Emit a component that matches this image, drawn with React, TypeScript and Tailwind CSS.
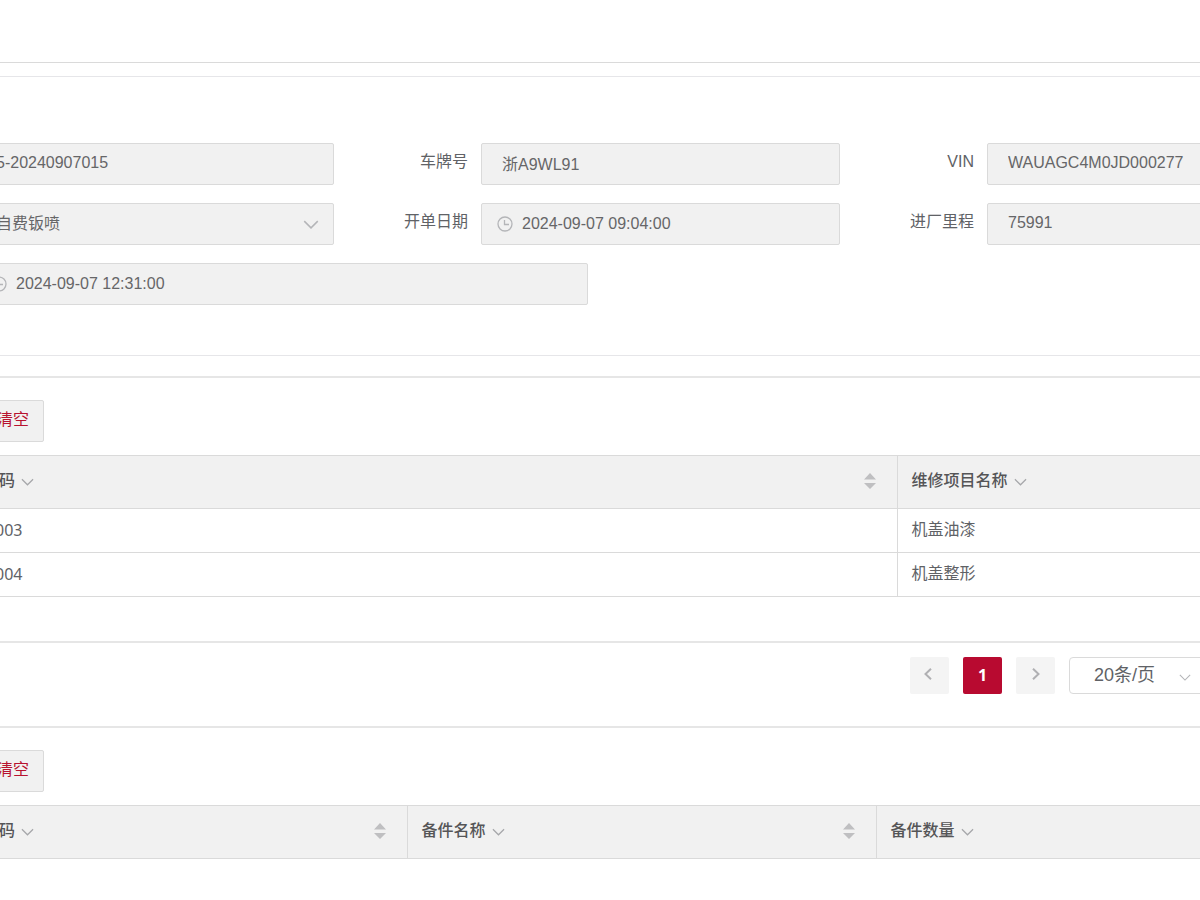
import type { ReactNode } from "react";

const fieldBox =
  "flex h-[42px] w-full items-center rounded-xs border border-[#dadada] bg-[#f1f1f1] text-base text-[#666668]";

function ChevronDown({ className }: { className?: string }) {
  return (
    <svg viewBox="0 0 14 8" fill="none" stroke="currentColor" strokeWidth="1.3" className={className} aria-hidden="true">
      <path d="M1 1l6 6 6-6" />
    </svg>
  );
}

function Clock() {
  return (
    <svg viewBox="0 0 16 16" fill="none" stroke="#b4b5b8" strokeWidth="1.3" className="size-4 shrink-0" aria-hidden="true">
      <circle cx="8" cy="8" r="7" />
      <path d="M7.5 4v4.500H12" />
    </svg>
  );
}

function Label({ htmlFor, children }: { htmlFor: string; children: ReactNode }) {
  return (
    <label htmlFor={htmlFor} className="h-[42px] pr-[13px] pt-[7px] text-right text-base text-[#606266]">
      {children}
    </label>
  );
}

function TextField({ id, value, label }: { id: string; value: string; label?: string }) {
  return <input id={id} aria-label={label} readOnly defaultValue={value} className={`${fieldBox} px-5 pb-0.5`} />;
}

function DateField({ id, value, label }: { id: string; value: string; label?: string }) {
  return (
    <div className={`${fieldBox} gap-[9px] pl-[15px] pr-5`}>
      <Clock />
      <input id={id} aria-label={label} readOnly defaultValue={value} className="min-w-0 flex-1 bg-transparent" />
    </div>
  );
}

function SortIcon() {
  return (
    <svg viewBox="0 0 12 16" fill="#bfbfc1" className="h-4 w-3 shrink-0" aria-hidden="true">
      <path d="M0 6.500L6 0l6 6.500zM0 10h12l-6 6z" />
    </svg>
  );
}

function HeadCell({ children, sortable, first }: { children: ReactNode; sortable?: boolean; first?: boolean }) {
  return (
    <th
      scope="col"
      className={`h-[53px] border-b border-r border-[#dadada] pb-0.5 pr-[21px] text-left font-medium text-[#555557] last:border-r-0 ${first ? "pl-6" : "pl-3.5"}`}
    >
      <div className="flex items-center gap-1.5">
        <span>{children}</span>
        <ChevronDown className="mt-0.5 h-2 w-[13px] text-[#a6a7aa]" />
        <span className="flex-1" />
        {sortable && <SortIcon />}
      </div>
    </th>
  );
}

function Toolbar() {
  return (
    <div className="pb-[13px] pl-[7px] pt-[22px]">
      <button type="button" className="h-[42px] rounded-xs border border-[#dadada] bg-[#f1f1f1] px-3.5 pb-[3px] text-base text-[#b8122f]">
        清空
      </button>
    </div>
  );
}

const repairs = [
  { code: "003", name: "机盖油漆" },
  { code: "004", name: "机盖整形" },
];

export default function App() {
  return (
    <div className="min-h-screen overflow-hidden bg-white font-['Liberation_Sans','Noto_Sans_CJK_SC',sans-serif]">
      <main className="-ml-[25px] text-base">
        <header className="h-[63px] border-b border-[#dadada]" />

        <form className="mt-[13px] border-y border-[#e6e6e9] pb-[50px] pt-[66px]">
          <div className="grid grid-cols-[359px_147px_359px_147px_359px] gap-y-[18px]">
            <TextField id="order" label="工单号" value="5-20240907015" />
            <Label htmlFor="plate">车牌号</Label>
            <TextField id="plate" value="浙A9WL91" />
            <Label htmlFor="vin">VIN</Label>
            <TextField id="vin" value="WAUAGC4M0JD000277" />

            <div className="relative">
              <select aria-label="维修类型" className={`${fieldBox} appearance-none px-5`}>
                <option>自费钣喷</option>
              </select>
              <ChevronDown className="pointer-events-none absolute right-[15px] top-[17px] h-[9px] w-4 text-[#b4b5b8]" />
            </div>
            <Label htmlFor="opened">开单日期</Label>
            <DateField id="opened" value="2024-09-07 09:04:00" />
            <Label htmlFor="mileage">进厂里程</Label>
            <TextField id="mileage" value="75991" />
          </div>
          <div className="mt-[18px] w-[613px]">
            <DateField id="finish" label="交车时间" value="2024-09-07 12:31:00" />
          </div>
        </form>

        <section className="mt-5 border-t-2 border-[#e6e6e6]">
          <Toolbar />
          <table className="w-full table-fixed border-collapse border-t border-[#dadada]">
            <colgroup>
              <col className="w-[922px]" />
              <col />
            </colgroup>
            <thead className="bg-[#f1f1f1]">
              <tr>
                <HeadCell first sortable>码</HeadCell>
                <HeadCell>维修项目名称</HeadCell>
              </tr>
            </thead>
            <tbody className="text-[#606266]">
              {repairs.map((row) => (
                <tr key={row.code}>
                  <td className="h-11 border-b border-r border-[#dadada] pb-0.5 pl-5 font-['Noto_Sans']">{row.code}</td>
                  <td className="h-11 border-b border-[#dadada] pb-0.5 pl-3.5">{row.name}</td>
                </tr>
              ))}
            </tbody>
          </table>
          <nav aria-label="分页" className="mt-11 flex justify-end gap-3.5 border-t-2 border-[#e6e6e6] pb-8 pt-3.5">
            <button type="button" aria-label="上一页" className="flex h-[37px] w-[39px] items-center justify-center rounded-xs bg-[#f4f4f4] pb-1 pr-1">
              <svg viewBox="0 0 8 12" fill="none" stroke="#b0b0b3" strokeWidth="2" className="h-3 w-2" aria-hidden="true">
                <path d="M7 .8L1.500 6 7 11.200" />
              </svg>
            </button>
            <button type="button" aria-current="page" className="h-[37px] w-[39px] rounded-xs bg-[#b80a30] pb-0.5 font-['Noto_Sans'] font-bold text-white">
              1
            </button>
            <button type="button" aria-label="下一页" className="flex h-[37px] w-[39px] items-center justify-center rounded-xs bg-[#f4f4f4] pb-1">
              <svg viewBox="0 0 8 12" fill="none" stroke="#b0b0b3" strokeWidth="2" className="h-3 w-2" aria-hidden="true">
                <path d="M1 .8L6.500 6 1 11.200" />
              </svg>
            </button>
            <div className="relative -mr-4 w-[147px]">
              <select aria-label="每页条数" className="h-[37px] w-full appearance-none rounded-sm border border-[#dadada] bg-white pb-0.5 pl-6 text-lg leading-6 text-[#606266]">
                <option>20条/页</option>
              </select>
              <ChevronDown className="pointer-events-none absolute right-[25px] top-[17px] h-[7px] w-3 text-[#b4b5b8]" />
            </div>
          </nav>
        </section>

        <section className="border-t-2 border-[#e6e6e6]">
          <Toolbar />
          <table className="w-full table-fixed border-collapse border-t border-[#dadada]">
            <colgroup>
              <col className="w-[432px]" />
              <col className="w-[469px]" />
              <col />
            </colgroup>
            <thead className="bg-[#f1f1f1]">
              <tr>
                <HeadCell first sortable>码</HeadCell>
                <HeadCell sortable>备件名称</HeadCell>
                <HeadCell>备件数量</HeadCell>
              </tr>
            </thead>
          </table>
        </section>
      </main>
    </div>
  );
}
